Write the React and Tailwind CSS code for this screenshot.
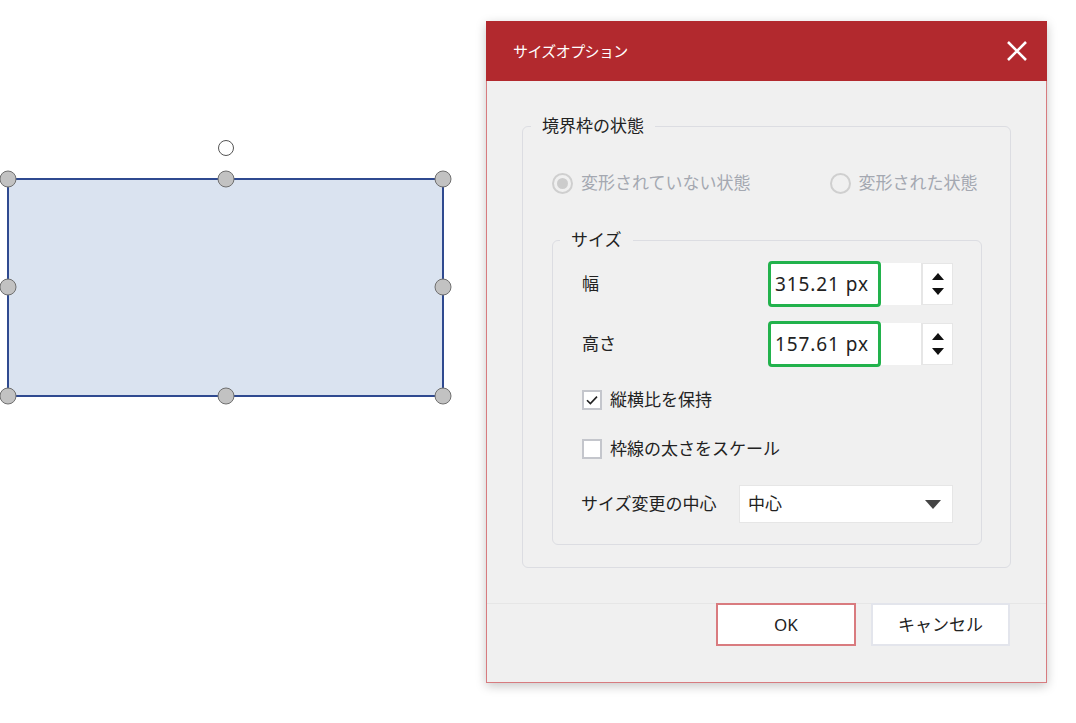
import React from "react";

const FONT = { fontFamily: '"Noto Sans", "Noto Sans CJK JP", sans-serif' };

// selection handles of the shape on the canvas
const HANDLES = [
  [8, 179], [226, 179], [443, 179],
  [8, 287], [443, 287],
  [8, 396], [226, 396], [443, 396],
];

function Canvas() {
  return (
    <svg className="absolute left-0 top-0" width="470" height="420" viewBox="0 0 470 420">
      <rect x="8" y="179" width="435" height="217" fill="#dae3f0" stroke="#2f4a90" strokeWidth="2" />
      <circle cx="226" cy="148" r="7.5" fill="#ffffff" stroke="#555" strokeWidth="1" />
      {HANDLES.map(([x, y]) => (
        <circle key={`${x}-${y}`} cx={x} cy={y} r="8" fill="#c2c2c2" stroke="#6f6f6f" strokeWidth="1" />
      ))}
    </svg>
  );
}

function Radio({ checked, label }) {
  return (
    <div className="flex items-center gap-[8px] h-[24px]">
      <span className="w-[21px] h-[21px] rounded-full border-2 border-[#cfcfcf] bg-[#f0f0f0] flex items-center justify-center">
        {checked && <span className="w-[11px] h-[11px] rounded-full bg-[#cccccc]" />}
      </span>
      <span className="text-[17px] text-[#a4a8b1] leading-[24px]">{label}</span>
    </div>
  );
}

function Checkbox({ checked, label }) {
  return (
    <div className="flex items-center gap-[8px] h-[24px]">
      <span className="w-[20px] h-[20px] border-2 border-[#c4c6cc] bg-white flex items-center justify-center">
        {checked && (
          <svg width="14" height="14" viewBox="0 0 14 14">
            <path d="M2 7.2 L5.4 10.6 L12 3.6" fill="none" stroke="#222" strokeWidth="1.6" />
          </svg>
        )}
      </span>
      <span className="text-[17px] text-[#222] leading-[24px]">{label}</span>
    </div>
  );
}

function NumberRow({ label, value }) {
  return (
    <div className="flex items-center justify-between h-[44px]">
      <span className="text-[17px] text-[#222]">{label}</span>
      <div className="flex h-[42px]">
        <div className="relative w-[154px] bg-white border-r border-[#e6e6e6]">
          <div className="absolute left-0 top-[-2px] bottom-[-2px] w-[113px] rounded-[4px] border-[3px] border-[#22b24c] bg-white flex items-center pl-[4px]">
            <span className="text-[19px] text-[#222] tracking-[0.9px]">{value}</span>
          </div>
        </div>
        <div className="w-[31px] bg-white border border-[#e6e6e6] flex flex-col items-center justify-center gap-[8px]">
          <svg width="12" height="7" viewBox="0 0 12 7"><path d="M6 0 L12 7 L0 7 Z" fill="#111" /></svg>
          <svg width="12" height="7" viewBox="0 0 12 7"><path d="M0 0 L12 0 L6 7 Z" fill="#111" /></svg>
        </div>
      </div>
    </div>
  );
}

function Dialog() {
  return (
    <div className="absolute left-[486px] top-[21px] w-[561px] h-[662px] bg-[#f0f0f0] border border-[#d77b7f] shadow-[0_3px_10px_rgba(0,0,0,0.22)] flex flex-col">
      <div className="h-[60px] bg-[#b2292e] flex items-center justify-between pl-[27px] pr-[19px] -mx-px -mt-px">
        <span className="text-white text-[15px] tracking-[-0.6px] pt-[1px]">サイズオプション</span>
        <svg width="22" height="22" viewBox="0 0 22 22">
          <path d="M2 2 L20 20 M20 2 L2 20" stroke="#fff" strokeWidth="2.6" />
        </svg>
      </div>

      <fieldset className="mt-[33px] mx-[35px] border border-[#dcdde2] rounded-[6px] px-0 pb-[22px]">
        <legend className="ml-[8px] px-[11px] text-[17px] leading-[24px] text-[#222]">境界枠の状態</legend>
        <div className="mt-[33px] ml-[29px] flex items-center gap-[79px]">
          <Radio checked label="変形されていない状態" />
          <Radio label="変形された状態" />
        </div>

        <fieldset className="mt-[33px] ml-[29px] mr-[28px] border border-[#dcdde2] rounded-[6px] pl-[29px] pr-[28px] pb-[21px]">
          <legend className="ml-[-22px] px-[11px] text-[17px] leading-[24px] text-[#222]">サイズ</legend>
          <div className="mt-[10px] flex flex-col">
            <NumberRow label="幅" value="315.21 px" />
            <div className="mt-[16px]">
              <NumberRow label="高さ" value="157.61 px" />
            </div>
            <div className="mt-[22px]">
              <Checkbox checked label="縦横比を保持" />
            </div>
            <div className="mt-[25px]">
              <Checkbox label="枠線の太さをスケール" />
            </div>
            <div className="mt-[24px] flex items-center justify-between -ml-[1px]">
              <span className="text-[17px] text-[#222]">サイズ変更の中心</span>
              <div className="w-[214px] h-[38px] bg-white border border-[#e6e6e6] flex items-center justify-between pl-[8px] pr-[11px]">
                <span className="text-[17px] text-[#222]">中心</span>
                <svg width="16" height="9" viewBox="0 0 16 9"><path d="M0 0 L16 0 L8 9 Z" fill="#444" /></svg>
              </div>
            </div>
          </div>
        </fieldset>
      </fieldset>

      <div className="mt-[35px] border-t border-[#e6e6e6] flex justify-end gap-[15px] pr-[36px]">
        <button className="w-[140px] h-[43px] -mt-px bg-white border-2 border-[#d97b7f] text-[17px] text-[#222]">OK</button>
        <button className="w-[139px] h-[43px] -mt-px bg-white border-2 border-[#e3e5ec] text-[17px] text-[#222]">キャンセル</button>
      </div>
    </div>
  );
}

export default function App() {
  return (
    <div className="relative w-[1076px] h-[723px] bg-white overflow-hidden" style={FONT}>
      <Canvas />
      <Dialog />
    </div>
  );
}
